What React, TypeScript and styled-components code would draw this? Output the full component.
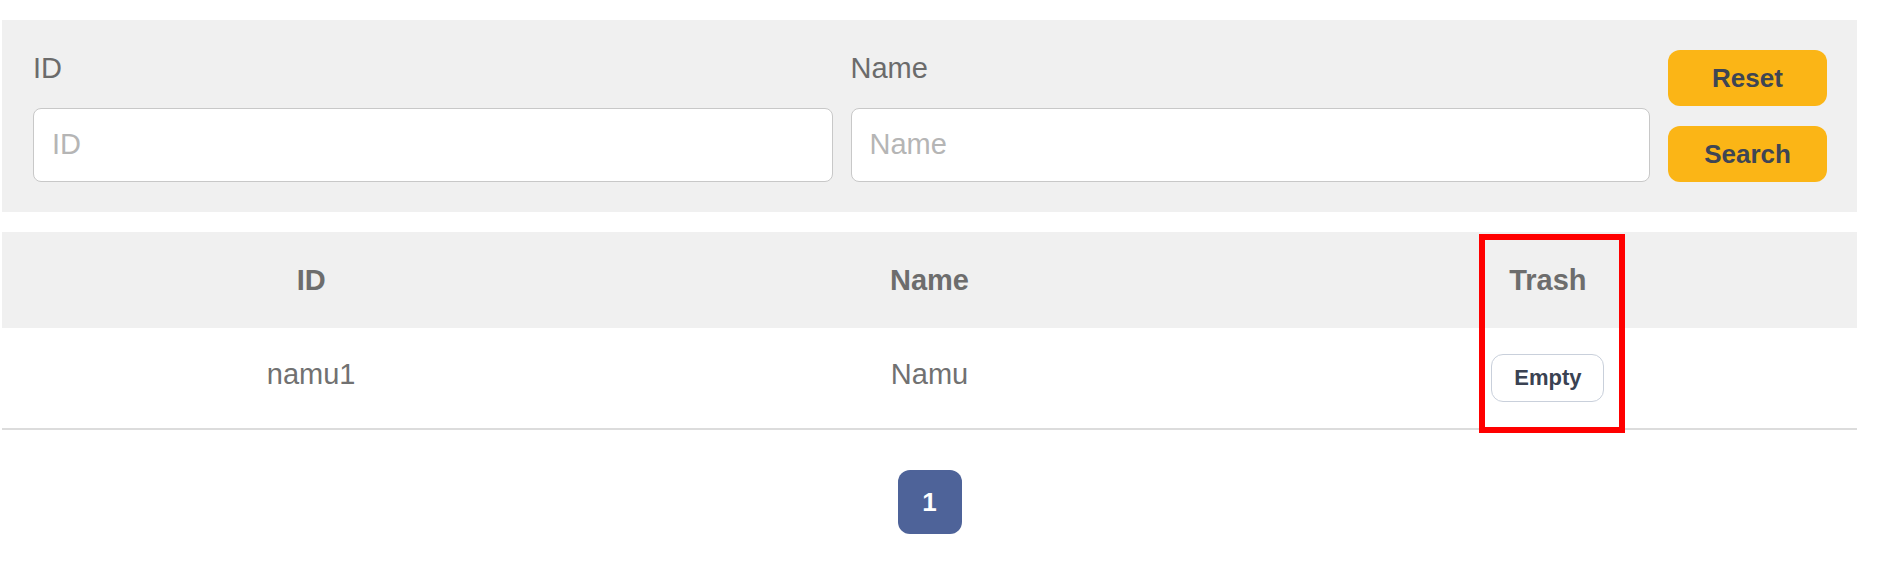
import styled, { createGlobalStyle } from "styled-components";

const GlobalStyle = createGlobalStyle`
  body {
    margin: 0;
    background: #ffffff;
    font-family: "Liberation Sans", Arial, sans-serif;
  }
`;

const users = [{ id: "namu1", name: "Namu" }];

export default function App() {
  return (
    <>
      <GlobalStyle />
      <Page>
        <FilterPanel>
          <Field>
            <Label htmlFor="filter-id">ID</Label>
            <Input id="filter-id" placeholder="ID" />
          </Field>
          <Field>
            <Label htmlFor="filter-name">Name</Label>
            <Input id="filter-name" placeholder="Name" />
          </Field>
          <ButtonStack>
            <ActionButton type="button">Reset</ActionButton>
            <ActionButton type="button">Search</ActionButton>
          </ButtonStack>
        </FilterPanel>

        <TableWrap>
          <Table>
            <thead>
              <HeadRow>
                <HeadCell>ID</HeadCell>
                <HeadCell>Name</HeadCell>
                <HeadCell>Trash</HeadCell>
              </HeadRow>
            </thead>
            <tbody>
              {users.map((u) => (
                <BodyRow key={u.id}>
                  <BodyCell $text>{u.id}</BodyCell>
                  <BodyCell $text>{u.name}</BodyCell>
                  <BodyCell>
                    <EmptyButton type="button">Empty</EmptyButton>
                  </BodyCell>
                </BodyRow>
              ))}
            </tbody>
          </Table>
          <Highlight />
        </TableWrap>

        <Pagination>
          <PageButton type="button" $active>1</PageButton>
        </Pagination>
      </Page>
    </>
  );
}

const Page = styled.div`
  padding: 20px 23px 0 2px;
`;

const FilterPanel = styled.div`
  display: flex;
  align-items: center;
  gap: 18px;
  padding: 30px 30px 30px 31px;
  background: #f0f0f0;
`;

const Field = styled.div`
  flex: 1;
  display: flex;
  flex-direction: column;
`;

const Label = styled.label`
  font-size: 29px;
  line-height: 34px;
  color: #6b6b6b;
  margin-bottom: 23px;
`;

const Input = styled.input`
  box-sizing: border-box;
  height: 74px;
  width: 100%;
  padding: 0 18px;
  border: 1.5px solid #c8c8c8;
  border-radius: 8px;
  background: #ffffff;
  font-family: inherit;
  font-size: 29px;
  color: #555;
  outline: none;

  &::placeholder {
    color: #b5b5b5;
  }
`;

const ButtonStack = styled.div`
  display: flex;
  flex-direction: column;
  gap: 20px;
  width: 159px;
`;

const ActionButton = styled.button`
  height: 56px;
  border: none;
  border-radius: 12px;
  background: #fbb516;
  color: #3e4554;
  font-family: inherit;
  font-size: 26px;
  font-weight: 700;
  cursor: pointer;
`;

const TableWrap = styled.div`
  position: relative;
  margin-top: 20px;
`;

const Table = styled.table`
  width: 100%;
  border-collapse: collapse;
  table-layout: fixed;
`;

const HeadRow = styled.tr`
  background: #f0f0f0;
  height: 96px;
`;

const HeadCell = styled.th`
  font-size: 29px;
  font-weight: 700;
  color: #6d6d6d;
  text-align: center;
  padding: 0;
`;

const BodyRow = styled.tr`
  height: 101px;
  border-bottom: 2px solid #dcdcdc;
`;

const BodyCell = styled.td<{ $text?: boolean }>`
  font-size: 29px;
  color: #717171;
  text-align: center;
  padding: 0 0 ${(p) => (p.$text ? "8px" : "0")};
`;

const EmptyButton = styled.button`
  width: 113px;
  height: 48px;
  border: 1.5px solid #c9d0db;
  border-radius: 12px;
  background: #ffffff;
  color: #3a4252;
  font-family: inherit;
  font-size: 22px;
  font-weight: 700;
  cursor: pointer;
`;

const Highlight = styled.div`
  position: absolute;
  top: 2px;
  left: calc(66.667% + 240px);
  width: 146px;
  height: 199px;
  box-sizing: border-box;
  border: 6px solid #ff0000;
  pointer-events: none;
`;

const Pagination = styled.div`
  display: flex;
  justify-content: center;
  margin-top: 40px;
`;

const PageButton = styled.button<{ $active?: boolean }>`
  width: 64px;
  height: 64px;
  border: none;
  border-radius: 12px;
  background: ${(p) => (p.$active ? "#4e6399" : "#ffffff")};
  color: ${(p) => (p.$active ? "#ffffff" : "#4e6399")};
  font-family: inherit;
  font-size: 26px;
  font-weight: 700;
`;
